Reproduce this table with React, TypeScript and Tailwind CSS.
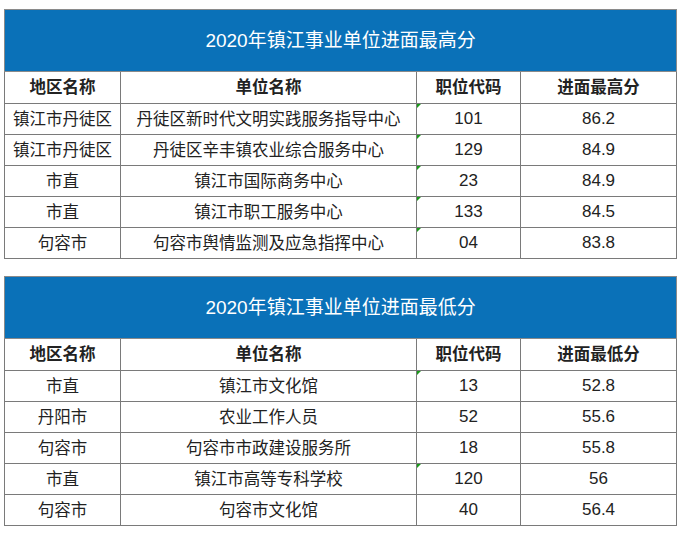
import React from "react";

type Row = { area: string; unit: string; code: string; score: string; mark?: boolean };

const high: Row[] = [
  { area: "镇江市丹徒区", unit: "丹徒区新时代文明实践服务指导中心", code: "101", score: "86.2", mark: true },
  { area: "镇江市丹徒区", unit: "丹徒区辛丰镇农业综合服务中心", code: "129", score: "84.9", mark: true },
  { area: "市直", unit: "镇江市国际商务中心", code: "23", score: "84.9", mark: true },
  { area: "市直", unit: "镇江市职工服务中心", code: "133", score: "84.5", mark: true },
  { area: "句容市", unit: "句容市舆情监测及应急指挥中心", code: "04", score: "83.8", mark: true },
];

const low: Row[] = [
  { area: "市直", unit: "镇江市文化馆", code: "13", score: "52.8", mark: true },
  { area: "丹阳市", unit: "农业工作人员", code: "52", score: "55.6" },
  { area: "句容市", unit: "句容市市政建设服务所", code: "18", score: "55.8" },
  { area: "市直", unit: "镇江市高等专科学校", code: "120", score: "56", mark: true },
  { area: "句容市", unit: "句容市文化馆", code: "40", score: "56.4" },
];

const font = { fontFamily: '"Liberation Sans", "Noto Sans CJK SC", sans-serif' };

function Table({ title, last, rows }: { title: string; last: string; rows: Row[] }) {
  const td = "border border-[#7a7a7a] text-center align-middle p-0";
  const num = "border border-[#7a7a7a] text-center align-middle p-0 text-[17px]";
  return (
    <table className="w-[672px] border-collapse table-fixed text-[16.5px] text-[#222]" style={font}>
      <colgroup>
        <col className="w-[116px]" />
        <col className="w-[296px]" />
        <col className="w-[104px]" />
        <col className="w-[156px]" />
      </colgroup>
      <tbody>
        <tr className="h-[62px]">
          <td colSpan={4} className="border border-[#8a8a8a] bg-[#0a71b8] text-center text-white text-[19px] pt-[2px]">
            {title}
          </td>
        </tr>
        <tr className="h-[32px] font-bold">
          <td className={td}>地区名称</td>
          <td className={td}>单位名称</td>
          <td className={td}>职位代码</td>
          <td className={td}>{last}</td>
        </tr>
        {rows.map((r, i) => (
          <tr key={i} className="h-[31px]">
            <td className={td}>{r.area}</td>
            <td className={td}>{r.unit}</td>
            <td className={num + " relative"}>
              {r.mark && (
                <span className="absolute left-0 top-0 w-0 h-0 border-t-[4px] border-t-[#1a9a1a] border-r-[4px] border-r-transparent" />
              )}
              {r.code}
            </td>
            <td className={num}>{r.score}</td>
          </tr>
        ))}
      </tbody>
    </table>
  );
}

export default function App() {
  return (
    <div className="w-[684px] h-[537px] bg-white pl-[4px] pt-[9px] flex flex-col gap-[17px]">
      <Table title="2020年镇江事业单位进面最高分" last="进面最高分" rows={high} />
      <Table title="2020年镇江事业单位进面最低分" last="进面最低分" rows={low} />
    </div>
  );
}
